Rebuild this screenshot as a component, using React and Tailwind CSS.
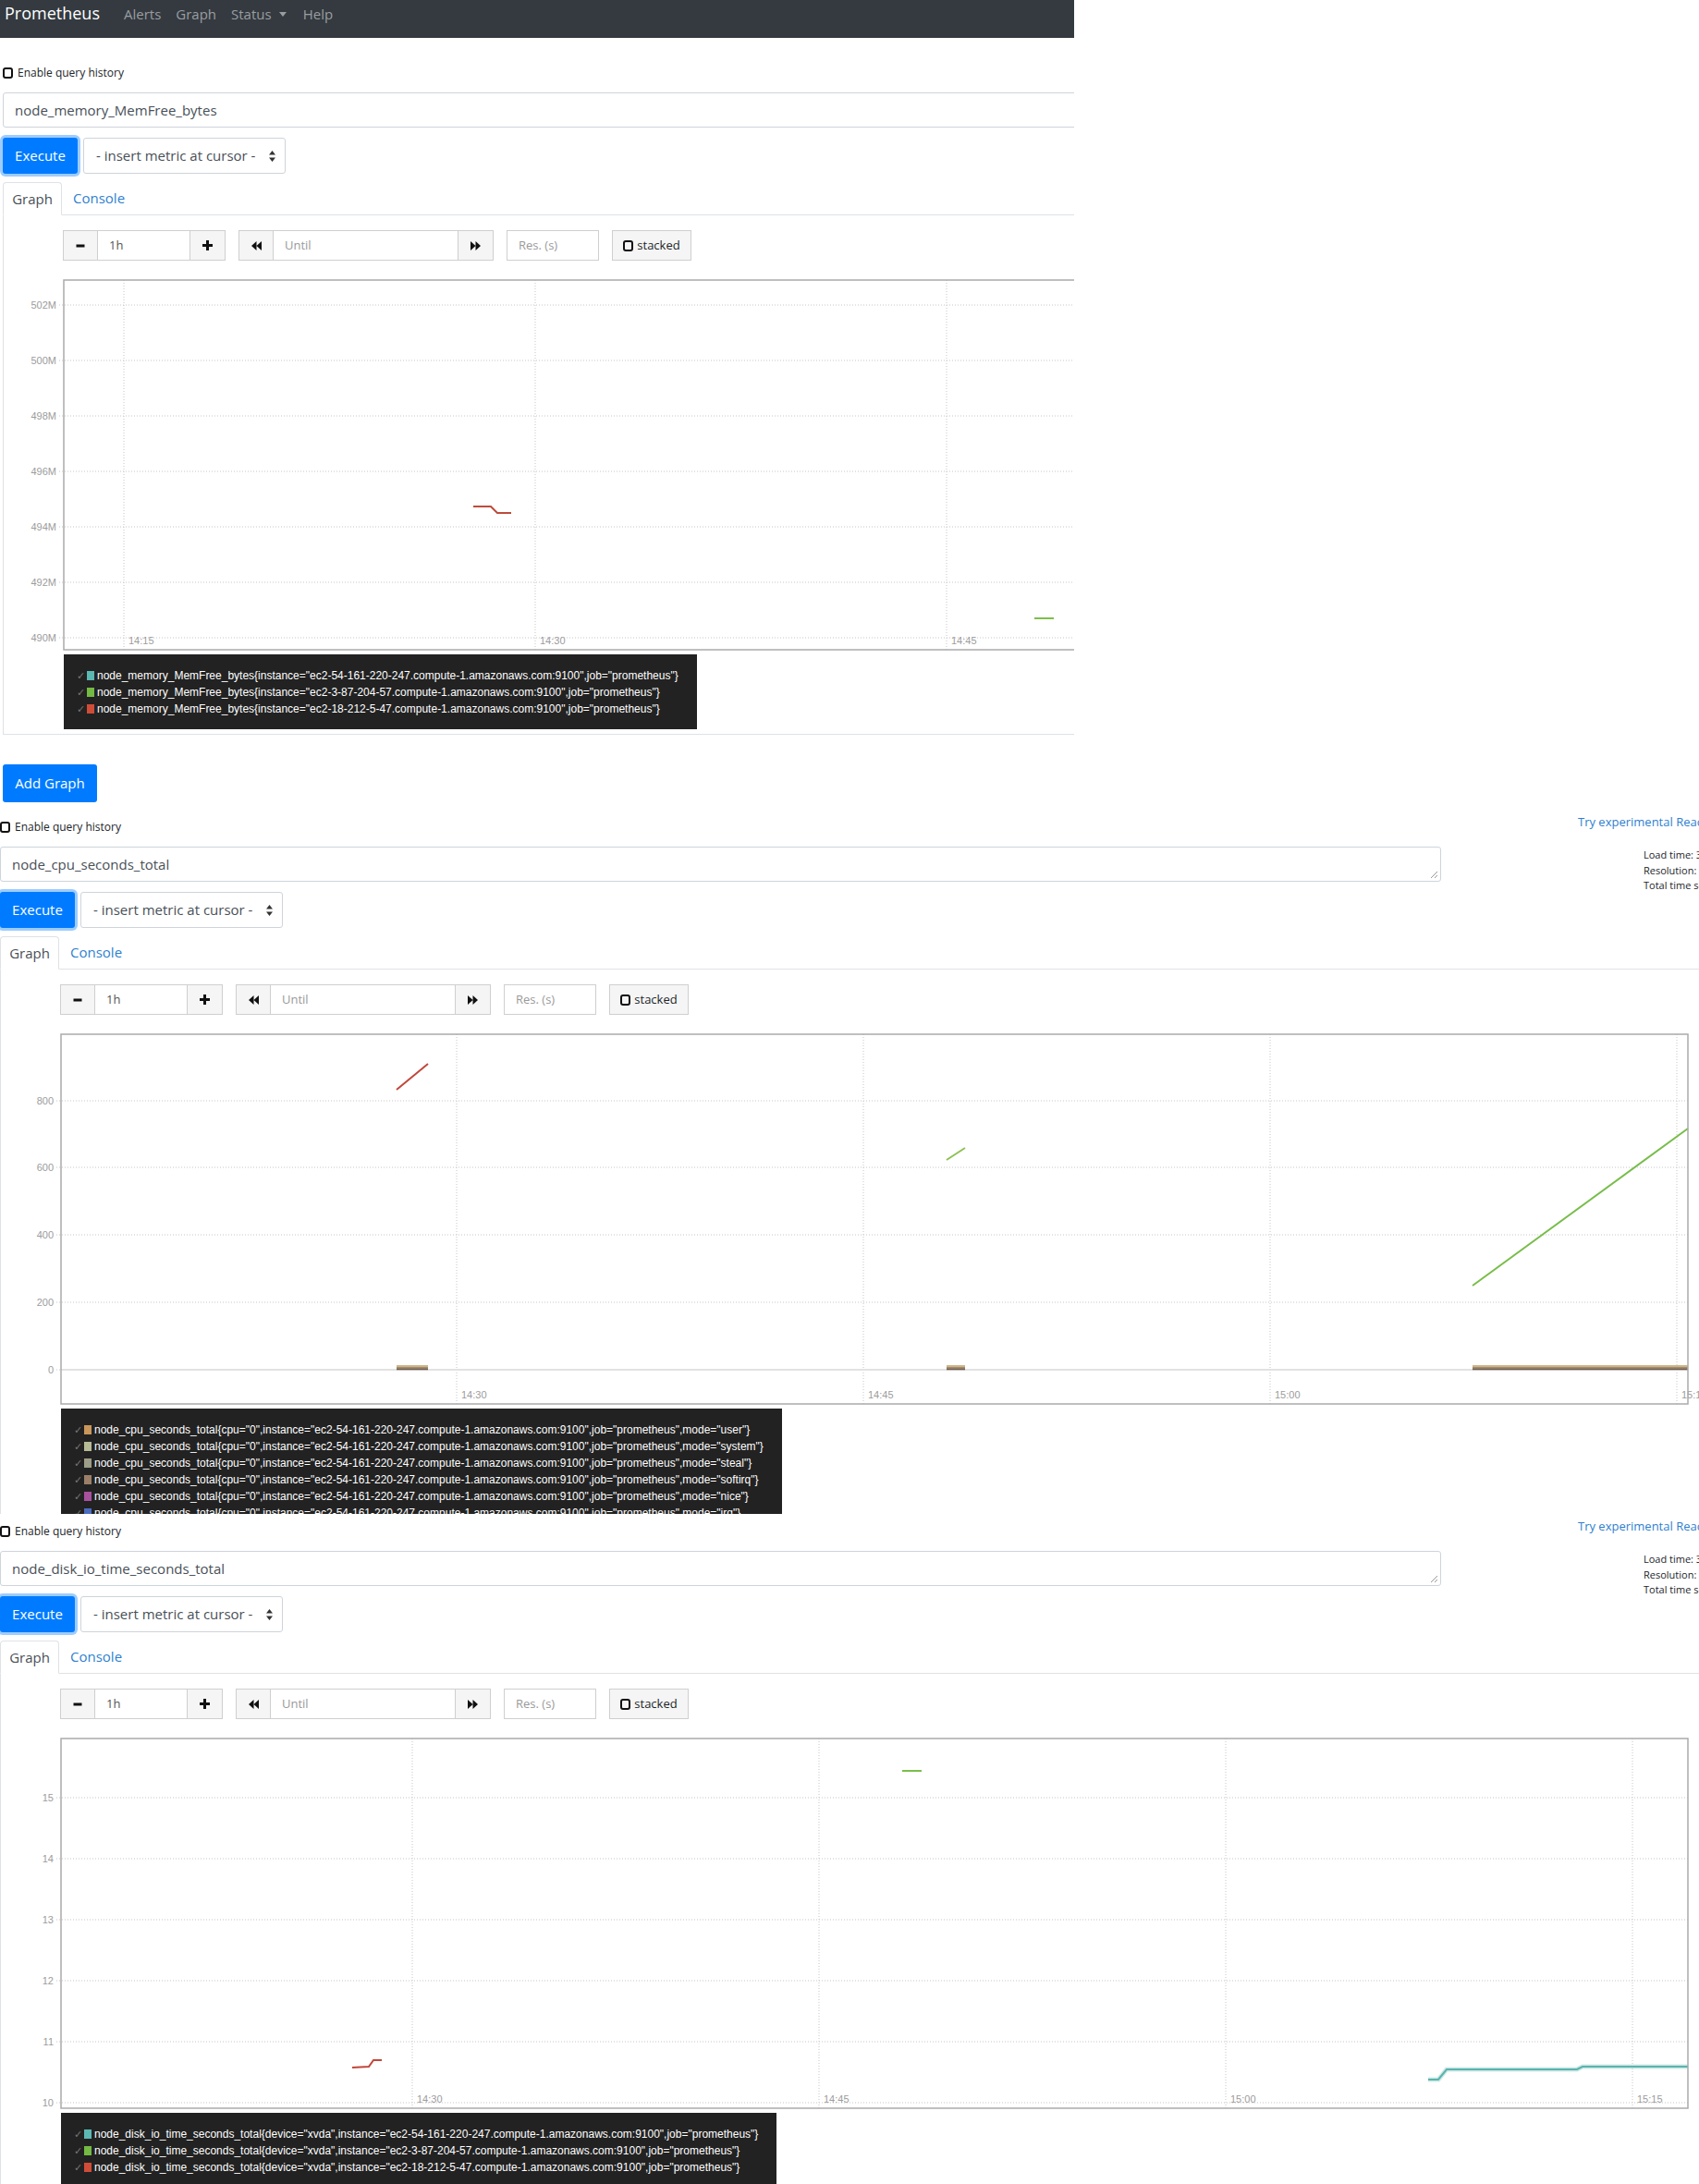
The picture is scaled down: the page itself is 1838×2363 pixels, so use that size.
import React from 'react';

const GRID = '#c6c6c6';
const AXIS_FONT = 'Liberation Sans, Arial, sans-serif';

function SquareIcon() {
  return (
    <svg width="11" height="12" viewBox="0 0 11 12" className="shrink-0">
      <rect x="1" y="1" width="9" height="10" rx="2" fill="none" stroke="#111" strokeWidth="2" />
    </svg>
  );
}

function MinusIcon() {
  return (
    <svg width="10" height="10" viewBox="0 0 10 10">
      <rect x="0.5" y="3.5" width="9" height="3" fill="#111" />
    </svg>
  );
}

function PlusIcon() {
  return (
    <svg width="11" height="11" viewBox="0 0 11 11">
      <rect x="0" y="4" width="11" height="3" fill="#111" />
      <rect x="4" y="0" width="3" height="11" fill="#111" />
    </svg>
  );
}

function BackIcon() {
  return (
    <svg width="11" height="10" viewBox="0 0 11 10">
      <path d="M5.5 0 L0 5 L5.5 10 Z M11 0 L5.5 5 L11 10 Z" fill="#111" />
    </svg>
  );
}

function ForwardIcon() {
  return (
    <svg width="11" height="10" viewBox="0 0 11 10">
      <path d="M0 0 L5.5 5 L0 10 Z M5.5 0 L11 5 L5.5 10 Z" fill="#111" />
    </svg>
  );
}

function SelectArrows() {
  return (
    <svg width="7" height="12" viewBox="0 0 7 12">
      <path d="M3.5 0 L7 4.5 L0 4.5 Z M3.5 12 L7 7.5 L0 7.5 Z" fill="#333" />
    </svg>
  );
}

function ResizeGrip() {
  return (
    <svg width="9" height="9" viewBox="0 0 9 9" className="absolute right-[2px] bottom-[2px]">
      <line x1="8" y1="1" x2="1" y2="8" stroke="#999" strokeWidth="1" />
      <line x1="8" y1="5" x2="5" y2="8" stroke="#999" strokeWidth="1" />
    </svg>
  );
}

function CtrlButton({ className = '', children }) {
  return (
    <div className={`flex items-center justify-center bg-[#f5f5f5] border border-[#cfcfcf] ${className}`}>
      {children}
    </div>
  );
}

function CtrlInput({ className = '', children, muted }) {
  return (
    <div
      className={`flex items-center bg-white border border-[#cfcfcf] pl-[12px] ${
        muted ? 'text-[#9a9a9a]' : 'text-[#555]'
      } ${className}`}
    >
      {children}
    </div>
  );
}

function Chart({ yTicks, xTicks, children }) {
  return (
    <svg width="1837" height="410" viewBox="1 0 1837 410" className="block mt-[16px]">
      {yTicks.map(([y, label]) => (
        <g key={label}>
          <line x1="61" x2="1826" y1={y} y2={y} stroke={GRID} strokeWidth="1" strokeDasharray="1 2" />
          <text x="58" y={y + 4} textAnchor="end" fontSize="11" fill="#9c9c9c" fontFamily={AXIS_FONT}>
            {label}
          </text>
        </g>
      ))}
      {xTicks.map(([x, label]) => (
        <g key={label}>
          <line x1={x} x2={x} y1="5" y2="405" stroke={GRID} strokeWidth="1" strokeDasharray="1 2" />
          <text x={x + 5} y="399" fontSize="11" fill="#9c9c9c" fontFamily={AXIS_FONT}>
            {label}
          </text>
        </g>
      ))}
      {children}
      <rect x="66" y="5" width="1760" height="400" fill="none" stroke="#ababab" strokeWidth="1.5" />
    </svg>
  );
}

function Legend({ items, className = '' }) {
  return (
    <div className={`ml-[65px] inline-block bg-[#222] pt-[14px] pb-[13px] pl-[14px] pr-[20px] ${className}`}>
      {items.map(([color, text]) => (
        <div
          key={text}
          className="flex h-[18px] items-center whitespace-nowrap font-['Liberation_Sans',Arial,sans-serif] text-[12px] text-white"
        >
          <span className="w-[11px] text-[11px] text-[#777]">✓</span>
          <span className="h-[10px] w-[8px]" style={{ background: color }} />
          <span className="ml-[3px]">{text}</span>
        </div>
      ))}
    </div>
  );
}

function QueryPanel({ query, chart, legend, bottomBorder }) {
  return (
    <div className="w-[1838px]">
      <div className="flex">
        <div className="w-[1559px] shrink-0">
          <div className="mt-[10px] flex h-[18px] items-center gap-[5px] text-[12px] text-[#212529]">
            <SquareIcon />
            <span>Enable query history</span>
          </div>
          <div className="relative mt-[12px] flex h-[38px] items-center rounded-[3px] border border-[#ced4da] pl-[12px] text-[15px] text-[#495057]">
            {query}
            <ResizeGrip />
          </div>
          <div className="mt-[11px] flex h-[39px] gap-[6px]">
            <div className="flex w-[81px] items-center justify-center rounded-[3px] bg-[#007bff] text-[15px] text-white shadow-[0_0_0_3px_rgba(38,143,255,0.45)]">
              Execute
            </div>
            <div className="flex w-[219px] items-center justify-between rounded-[3px] border border-[#ced4da] pl-[13px] pr-[10px] text-[15px] text-[#495057]">
              <span>- insert metric at cursor -</span>
              <SelectArrows />
            </div>
          </div>
        </div>
        <div className="ml-[148px] shrink-0 whitespace-nowrap">
          <div className="mt-[4px] text-[13px] leading-[18px] text-[#2f7fd0]">Try experimental React UI</div>
          <div className="mt-[19px] pl-[71px] text-[11px] leading-[16.5px] text-[#212529]">
            <div>Load time: 35ms</div>
            <div>Resolution: 14s</div>
            <div>Total time series: 18</div>
          </div>
        </div>
      </div>

      <div className="mt-[9px] flex h-[36px] border-b border-[#dee2e6] text-[15px]">
        <div className="-mb-px flex h-[36px] w-[64px] items-center justify-center rounded-t-[4px] border border-[#dee2e6] border-b-white bg-white text-[#495057]">
          Graph
        </div>
        <div className="ml-[12px] flex items-center text-[#2f7fd0]">Console</div>
      </div>

      <div className={`border-l border-[#dee2e6] pt-[16px] ${bottomBorder ? 'border-b pb-[5px]' : ''}`}>
        <div className="ml-[64px] flex h-[33px] text-[13px]">
          <CtrlButton className="w-[38px]">
            <MinusIcon />
          </CtrlButton>
          <CtrlInput className="-ml-px w-[101px]">1h</CtrlInput>
          <CtrlButton className="-ml-px w-[39px]">
            <PlusIcon />
          </CtrlButton>
          <CtrlButton className="ml-[14px] w-[38px]">
            <BackIcon />
          </CtrlButton>
          <CtrlInput className="-ml-px w-[201px]" muted>
            Until
          </CtrlInput>
          <CtrlButton className="-ml-px w-[39px]">
            <ForwardIcon />
          </CtrlButton>
          <CtrlInput className="ml-[14px] w-[100px]" muted>
            Res. (s)
          </CtrlInput>
          <CtrlButton className="ml-[14px] w-[86px] gap-[4px] text-[#212529]">
            <SquareIcon />
            <span>stacked</span>
          </CtrlButton>
        </div>
        {chart}
        <Legend items={legend} />
      </div>
    </div>
  );
}

const memLegend = [
  ['#5cb8b2', 'node_memory_MemFree_bytes{instance="ec2-54-161-220-247.compute-1.amazonaws.com:9100",job="prometheus"}'],
  ['#73b943', 'node_memory_MemFree_bytes{instance="ec2-3-87-204-57.compute-1.amazonaws.com:9100",job="prometheus"}'],
  ['#cf4d38', 'node_memory_MemFree_bytes{instance="ec2-18-212-5-47.compute-1.amazonaws.com:9100",job="prometheus"}'],
];

const cpuInst = 'instance="ec2-54-161-220-247.compute-1.amazonaws.com:9100",job="prometheus"';
const cpuLegend = [
  ['#c9975a', `node_cpu_seconds_total{cpu="0",${cpuInst},mode="user"}`],
  ['#b6bb95', `node_cpu_seconds_total{cpu="0",${cpuInst},mode="system"}`],
  ['#9d9d88', `node_cpu_seconds_total{cpu="0",${cpuInst},mode="steal"}`],
  ['#9c7f68', `node_cpu_seconds_total{cpu="0",${cpuInst},mode="softirq"}`],
  ['#a9509e', `node_cpu_seconds_total{cpu="0",${cpuInst},mode="nice"}`],
  ['#4d6dbf', `node_cpu_seconds_total{cpu="0",${cpuInst},mode="irq"}`],
  ['#6bb5a8', `node_cpu_seconds_total{cpu="0",${cpuInst},mode="iowait"}`],
];

const diskLegend = [
  ['#5cb8b2', 'node_disk_io_time_seconds_total{device="xvda",instance="ec2-54-161-220-247.compute-1.amazonaws.com:9100",job="prometheus"}'],
  ['#73b943', 'node_disk_io_time_seconds_total{device="xvda",instance="ec2-3-87-204-57.compute-1.amazonaws.com:9100",job="prometheus"}'],
  ['#cf4d38', 'node_disk_io_time_seconds_total{device="xvda",instance="ec2-18-212-5-47.compute-1.amazonaws.com:9100",job="prometheus"}'],
];

function ZeroBand({ x1, x2 }) {
  return (
    <g>
      <line x1={x1} x2={x2} y1="364" y2="364" stroke="#cdb68a" strokeWidth="2" />
      <line x1={x1} x2={x2} y1="366" y2="366" stroke="#a48c6c" strokeWidth="2" />
      <line x1={x1} x2={x2} y1="367.5" y2="367.5" stroke="#6e5d52" strokeWidth="1.5" />
    </g>
  );
}

export default function App() {
  const memChart = (
    <Chart
      yTicks={[[32, '502M'], [92, '500M'], [152, '498M'], [212, '496M'], [272, '494M'], [332, '492M'], [392, '490M']]}
      xTicks={[[131, '14:15'], [576, '14:30'], [1021, '14:45'], [1466, '15:00']]}
    >
      <polyline points="509,250 528,250 535,257 550,257" fill="none" stroke="#bd4c3b" strokeWidth="2" />
      <line x1="1116" y1="371" x2="1137" y2="371" stroke="#7cbf4a" strokeWidth="2" />
    </Chart>
  );

  const cpuChart = (
    <Chart
      yTicks={[[77, '800'], [149, '600'], [222, '400'], [295, '200'], [368, '0']]}
      xTicks={[[494, '14:30'], [934, '14:45'], [1374, '15:00'], [1814, '15:15']]}
    >
      <line x1="66" x2="1826" y1="368" y2="368" stroke="#e2e2e2" strokeWidth="2" />
      <line x1="429" y1="65" x2="463" y2="37" stroke="#c0473a" strokeWidth="2" />
      <line x1="1024" y1="141" x2="1044" y2="128" stroke="#8cc152" strokeWidth="2" />
      <line x1="1593" y1="277" x2="1826" y2="107" stroke="#78bd4a" strokeWidth="2" />
      <ZeroBand x1={429} x2={463} />
      <ZeroBand x1={1024} x2={1044} />
      <ZeroBand x1={1593} x2={1826} />
    </Chart>
  );

  const diskChart = (
    <Chart
      yTicks={[[69, '15'], [135, '14'], [201, '13'], [267, '12'], [333, '11'], [399, '10']]}
      xTicks={[[446, '14:30'], [886, '14:45'], [1326, '15:00'], [1766, '15:15']]}
    >
      <polyline points="381,361 399,360 404,353 413,353" fill="none" stroke="#c0473a" strokeWidth="2" />
      <polyline
        points="1545,374 1556,374 1565,363 1706,363 1712,360 1826,360"
        fill="none"
        stroke="#5ab4ad"
        strokeOpacity="0.3"
        strokeWidth="5"
      />
      <polyline
        points="1545,374 1556,374 1565,363 1706,363 1712,360 1826,360"
        fill="none"
        stroke="#5ab4ad"
        strokeWidth="2"
      />
      <line x1="976" y1="40" x2="997" y2="40" stroke="#7cbf4a" strokeWidth="2" />
    </Chart>
  );

  return (
    <div className="h-[2363px] w-[1838px] overflow-hidden bg-white font-['Open_Sans','Noto_Sans',sans-serif] text-[#212529]">
      <div className="w-[1162px] overflow-hidden">
        <nav className="flex h-[41px] items-start bg-[#343a40] whitespace-nowrap">
          <span className="ml-[5px] mt-[2px] text-[18px] leading-[24px] text-white">Prometheus</span>
          <div className="ml-[26px] mt-[5px] flex items-center text-[15px] leading-[20px] text-[#9a9da0]">
            <span>Alerts</span>
            <span className="ml-[16px]">Graph</span>
            <span className="ml-[16px]">Status</span>
            <svg width="8" height="5" viewBox="0 0 8 5" className="ml-[8px]">
              <path d="M0 0 L8 0 L4 5 Z" fill="#9a9da0" />
            </svg>
            <span className="ml-[18px]">Help</span>
          </div>
        </nav>

        <div className="ml-[3px] mt-[19px]">
          <QueryPanel query="node_memory_MemFree_bytes" chart={memChart} legend={memLegend} bottomBorder />
        </div>

        <div className="ml-[3px] mt-[32px] flex h-[41px] w-[102px] items-center justify-center rounded-[3px] bg-[#007bff] text-[15px] text-white">
          Add Graph
        </div>
      </div>

      <div className="mt-[8px] h-[762px] overflow-hidden">
        <QueryPanel query="node_cpu_seconds_total" chart={cpuChart} legend={cpuLegend} />
      </div>

      <div className="h-[725px] overflow-hidden">
        <QueryPanel query="node_disk_io_time_seconds_total" chart={diskChart} legend={diskLegend} />
      </div>
    </div>
  );
}
